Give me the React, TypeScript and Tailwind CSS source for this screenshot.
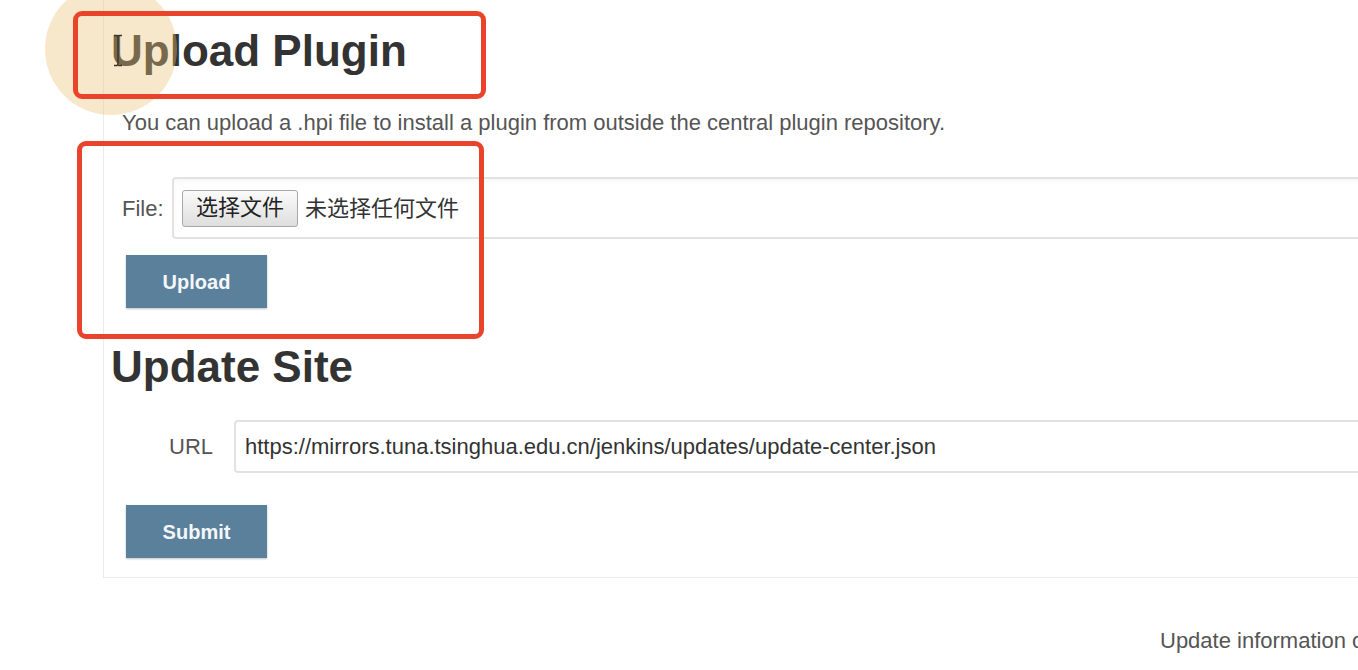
import React from "react";

const Annotation = ({ className }: { className: string }) => (
    <div className={`absolute border-[5px] border-[#e9442b] rounded-[9px] pointer-events-none ${className}`} />
);

const ActionButton = ({ label }: { label: string }) => (
    <button className="ml-[15px] w-[141px] h-[53px] bg-[#5a809b] text-[#f4f7fa] font-bold text-[20px] shadow-[0_1px_2px_rgba(0,0,0,0.25)]">
        {label}
    </button>
);

export default function App() {
    return (
        <div className="relative w-[1358px] h-[670px] overflow-hidden bg-white font-['Liberation_Sans','Noto_Sans_CJK_SC',sans-serif]">
            <div className="ml-[103px] w-[1400px] h-[578px] border-l border-b border-[#ececec] pl-[7px] pt-[29px]">
                <h1 className="text-[44px] leading-[44px] font-bold text-[#333]">Upload Plugin</h1>
                <p className="mt-[37px] ml-[11px] text-[22px] leading-[26px] text-[#555]">
                    You can upload a .hpi file to install a plugin from outside the central plugin repository.
                </p>

                <div className="mt-[41px] ml-[11px] flex items-center">
                    <span className="text-[22px] text-[#555] w-[50px]">File:</span>
                    <div className="flex-1 h-[62px] border-2 border-[#e2e2e2] rounded-[4px] flex items-center pl-[8px] shadow-[inset_0_3px_4px_rgba(0,0,0,0.03)]">
                        <button className="h-[37px] w-[116px] border border-[#a8a8a8] rounded-[3px] bg-linear-to-b from-[#fbfbfb] to-[#dedede] text-[22px] leading-none text-[#222]">
                            选择文件
                        </button>
                        <span className="ml-[7px] text-[22px] text-[#333]">未选择任何文件</span>
                    </div>
                </div>

                <div className="mt-[16px]">
                    <ActionButton label="Upload" />
                </div>

                <h2 className="mt-[37px] text-[44px] leading-[44px] font-bold text-[#333]">Update Site</h2>

                <div className="mt-[31px] ml-[58px] flex items-center">
                    <span className="text-[22px] text-[#555] w-[65px]">URL</span>
                    <div className="flex-1 h-[53px] border-2 border-[#e2e2e2] rounded-[4px] flex items-center pl-[9px] text-[22px] text-[#333]">
                        https://mirrors.tuna.tsinghua.edu.cn/jenkins/updates/update-center.json
                    </div>
                </div>

                <div className="mt-[32px]">
                    <ActionButton label="Submit" />
                </div>
            </div>

            <div className="mt-[50px] ml-[1160px] whitespace-nowrap text-[22px] leading-[26px] text-[#555]">
                Update information obtained: 5 min 2 sec ago
            </div>

            {/* cursor highlight */}
            <div className="absolute left-[45px] top-[-17px] w-[132px] h-[132px] rounded-full bg-[rgba(237,195,117,0.38)] pointer-events-none" />
            <svg className="absolute left-[113px] top-[34px]" width="10" height="33" viewBox="0 0 10 33">
                <path d="M1 1.5h3l1 1 1-1h3M5 2.5v28M1 31.5h3l1-1 1 1h3" fill="none" stroke="#3a3428" strokeWidth="1.5" />
            </svg>

            <Annotation className="left-[73px] top-[11px] w-[413px] h-[88px]" />
            <Annotation className="left-[77px] top-[141px] w-[407px] h-[198px]" />
        </div>
    );
}
